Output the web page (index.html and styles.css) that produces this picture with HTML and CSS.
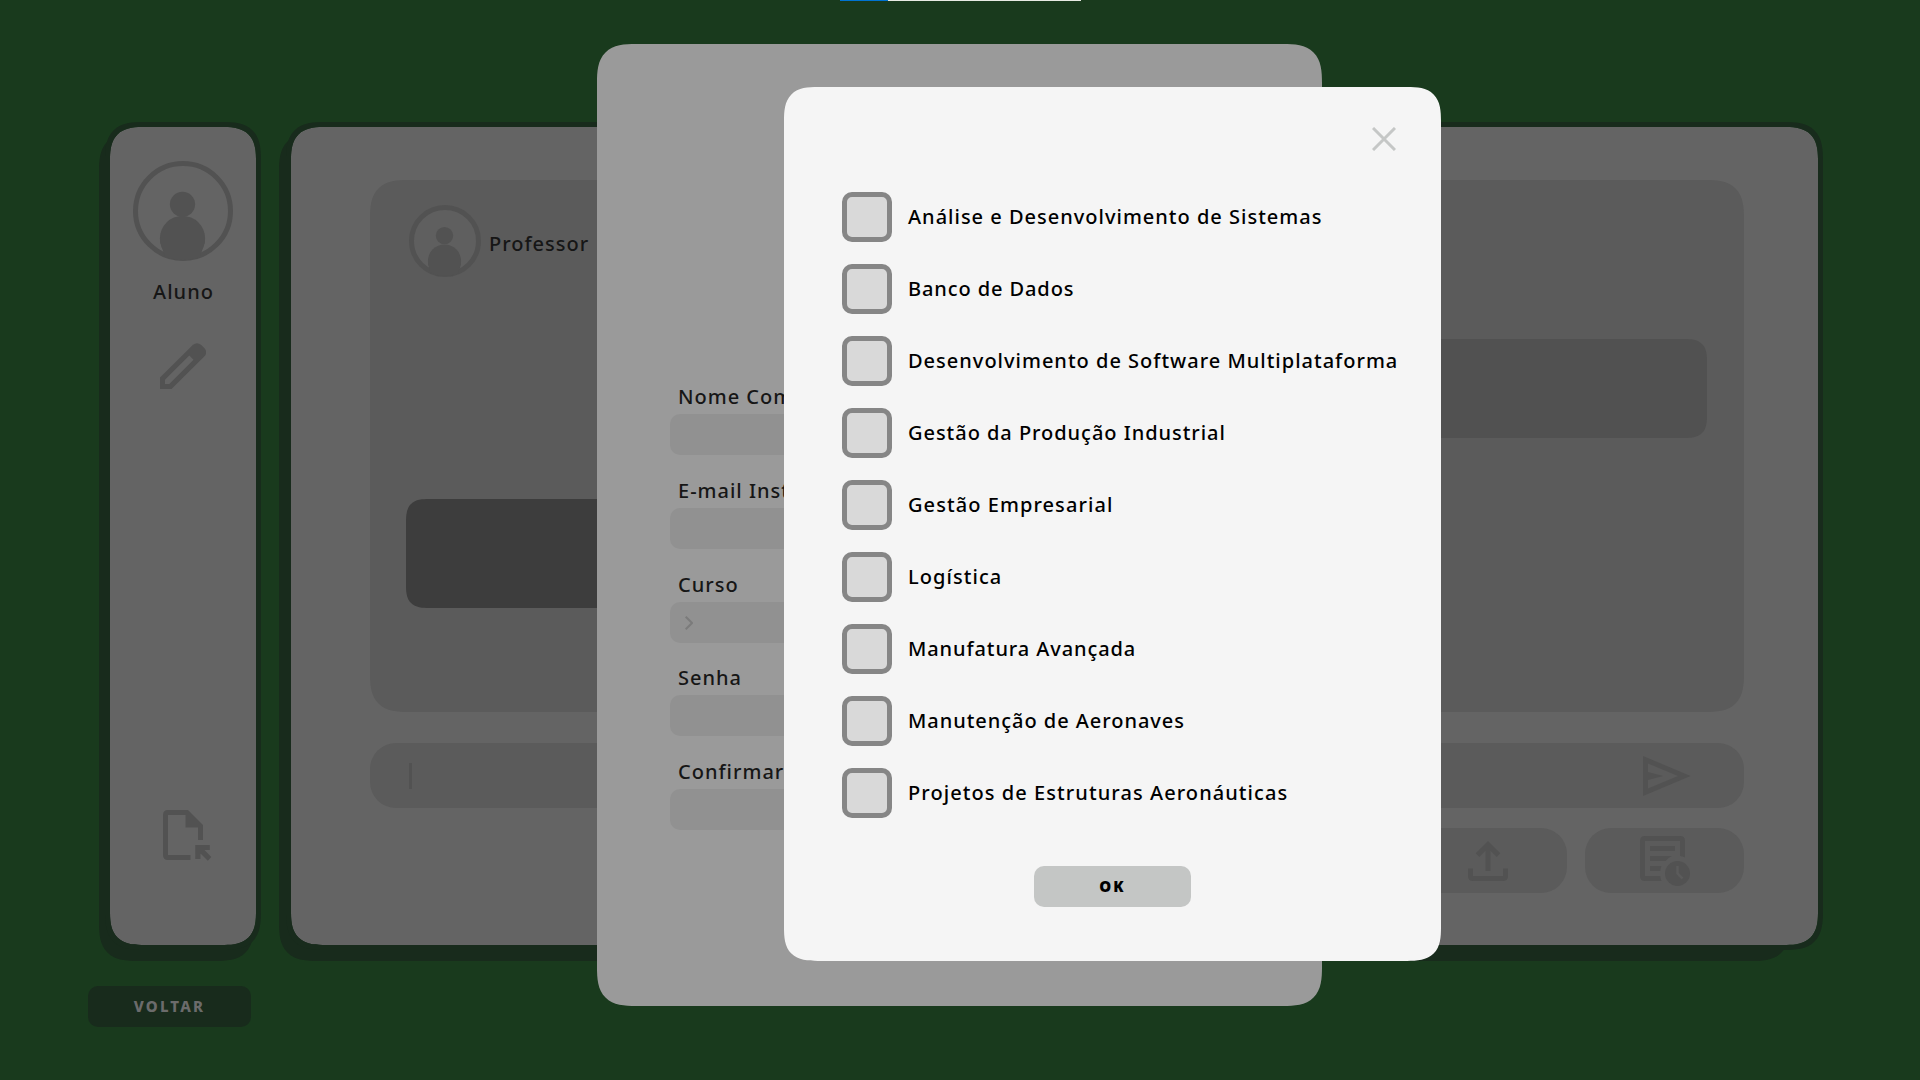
FILE: index.html
```html
<!DOCTYPE html>
<html lang="pt-BR">
<head>
<meta charset="utf-8">
<title>Cadastro de aluno</title>
<link rel="stylesheet" href="styles.css">
</head>
<body>
<div class="loader"><div class="loader-done"></div></div>
<main class="app">
  <aside class="panel sidebar">
    <svg class="avatar" width="100" height="100" viewBox="0 0 100 100">
      <clipPath id="big"><circle cx="50" cy="50" r="49"/></clipPath>
      <circle cx="50" cy="50" r="47.5" fill="none" stroke="currentColor" stroke-width="5"/>
      <g clip-path="url(#big)"><circle cx="49.5" cy="43.3" r="12.6"/><circle cx="49.5" cy="77.5" r="22.6"/><path d="M27 77.500h45v3L66 99H33L27 80.500z"/></g>
    </svg>
    <span class="name">Aluno</span>
    <svg class="pencil" width="46" height="46" viewBox="0 0 46 46">
      <path fill-rule="evenodd" d="M0 46V34.500L33 1.800Q37-1.500 41 1.800L44.500 5.300Q48 9.500 44.300 13.500L11.500 46ZM5 41H9.300L33.500 16.700L29.300 12.500L5 36.700Z"/>
    </svg>
    <svg class="file" width="50" height="52" viewBox="0 0 50 52">
      <path d="M5 0H25L40 15V30H35V17.500H22.500V5H5V45H27.500V50H5Q0 50 0 45V5Q0 0 5 0ZM32.300 35H46.800V40H41.500L48.300 47L44.800 50.700L37.500 43.500V49H32.300Z"/>
    </svg>
  </aside>
  <section class="panel content">
    <div class="chat">
      <div class="author">
        <svg width="72" height="72" viewBox="0 0 72 72">
          <clipPath id="small"><circle cx="36" cy="36" r="35"/></clipPath>
          <circle cx="36" cy="36" r="33.500" fill="#5f5f5f" stroke="currentColor" stroke-width="5"/>
          <g clip-path="url(#small)"><circle cx="35.500" cy="30.600" r="8.700"/><circle cx="35.500" cy="56" r="16.600"/><path d="M19 56h33v3l-4 13H23l-4-13z"/></g>
        </svg>
        <span class="name">Professor</span>
      </div>
      <div class="message message-sent"></div>
      <div class="message message-received"></div>
    </div>
    <div class="composer">
      <div class="caret"></div>
      <svg width="48" height="40" viewBox="0 0 48 40">
        <path fill-rule="evenodd" d="M0 0L47.500 20L0 40ZM5 7.500V16L20 20L5 24V32.500L35 20Z"/>
      </svg>
    </div>
    <div class="actions">
      <button class="action upload"><svg width="40" height="40" viewBox="0 0 40 40">
        <path d="M20 0L32.300 12.300L28.700 16L22.500 9.700V30H17.500V9.700L11.300 16L7.700 12.300ZM0 27.500H5V35H35V27.500H40V35Q40 40 35 40H5Q0 40 0 35Z"/>
      </svg></button>
      <button class="action"><svg width="50" height="50" viewBox="0 0 50 50">
        <path d="M5 0H40Q45 0 45 5V21.500Q42.500 20.300 40 20V5H5V40H20.300Q20.500 42.800 21.500 45H5Q0 45 0 40V5Q0 0 5 0ZM10 10H35V15H10ZM10 20H32Q28.500 21.500 25.500 25H10ZM10 30H21.500Q20.500 32 20.300 35H10Z"/>
        <circle cx="37.500" cy="37.500" r="12.500"/><path class="hands" d="M37.500 30V37.500L42.500 42.500"/>
      </svg></button>
    </div>
  </section>
</main>
<button class="back">VOLTAR</button>

<form class="signup">
  <label class="field"><span>Nome Completo</span><i class="input"></i></label>
  <label class="field"><span>E-mail Institucional</span><i class="input"></i></label>
  <label class="field"><span>Curso</span><i class="input"><svg width="8" height="14" viewBox="0 0 8 14"><path d="M.7.7L7 7L.7 13.300"/></svg></i></label>
  <label class="field password"><span>Senha</span><i class="input"></i></label>
  <label class="field"><span>Confirmar Senha</span><i class="input"></i></label>
</form>

<div class="courses">
  <svg class="close" width="24" height="24" viewBox="0 0 24 24"><path d="M1 1L23 23M23 1L1 23"/></svg>
  <ul class="list">
    <li><i class="box"></i><span>Análise e Desenvolvimento de Sistemas</span></li>
    <li><i class="box"></i><span class="tight">Banco de Dados</span></li>
    <li><i class="box"></i><span>Desenvolvimento de Software Multiplataforma</span></li>
    <li><i class="box"></i><span class="snug">Gestão da Produção Industrial</span></li>
    <li><i class="box"></i><span class="loose">Gestão Empresarial</span></li>
    <li><i class="box"></i><span class="loose">Logística</span></li>
    <li><i class="box"></i><span class="tight">Manufatura Avançada</span></li>
    <li><i class="box"></i><span class="snug">Manutenção de Aeronaves</span></li>
    <li><i class="box"></i><span class="loose">Projetos de Estruturas Aeronáuticas</span></li>
  </ul>
  <button class="ok">OK</button>
</div>
</body>
</html>
```
FILE: styles.css
```css
* { box-sizing: border-box; }
body {
  margin: 0;
  width: 1920px;
  height: 1080px;
  overflow: hidden;
  position: relative;
  background: #193a1d;
  font: 500 20px/28px "Noto Sans", sans-serif;
  letter-spacing: 1px;
  color: #161616;
}
svg { display: block; fill: currentColor; flex: none; }
button { border: 0; padding: 0; font: inherit; letter-spacing: inherit; color: inherit; }
.loader { width: 241px; height: 1px; margin-left: 840px; background: #e8ebe4; }
.loader-done { width: 48px; height: 1px; background: #0073d1; }

.app { display: flex; gap: 25px; padding: 121px 0 0 105px; }
.panel {
  position: relative;
  height: 828px;
  border: 5px solid #182b1c;
  border-radius: 31px;
  background: #646464;
  background-clip: padding-box;
  color: #525252;
}
.panel::before {
  content: "";
  position: absolute;
  z-index: -1;
  inset: 6px 2px -16px -11px;
  border-radius: 31px;
  background: #182b1c;
}
.sidebar {
  width: 156px;
  padding-top: 34px;
  display: flex;
  flex-direction: column;
  align-items: center;
}
.name { color: #161616; }
.sidebar .name { margin: 17px 0 0 1px; }
.pencil { margin-top: 37px; }
.file { margin: 421px 0 0 10px; }
.content { width: 1537px; padding: 53px 74px 0 79px; }
.content::before { right: 28px; left: -12px; }

.chat {
  height: 532px;
  padding: 25px 37px 0 36px;
  border-radius: 31px;
  background: #5b5b5b;
  display: flex;
  flex-direction: column;
}
.author { display: flex; align-items: center; padding-left: 3px; gap: 8px; height: 72px; }
.author .name { padding-top: 6px; }
.message { width: 600px; border-radius: 18px; }
.message-sent { align-self: flex-end; height: 99px; margin-top: 62px; background: #515151; }
.message-received { height: 109px; margin-top: 61px; background: #3d3d3d; }
.composer {
  margin-top: 31px;
  height: 65px;
  padding: 0 53px 0 39px;
  border-radius: 26px;
  background: #5b5b5b;
  display: flex;
  align-items: center;
  justify-content: space-between;
}
.caret { width: 3px; height: 26px; background: #525252; }
.actions { display: flex; justify-content: flex-end; gap: 18px; margin-top: 20px; }
.action {
  width: 159px;
  height: 65px;
  padding-top: 1px;
  border-radius: 26px;
  background: #5b5b5b;
  display: flex;
  align-items: center;
  justify-content: center;
}
.hands { fill: none; stroke: #5b5b5b; stroke-width: 2.5; }
.back {
  display: block;
  width: 163px;
  height: 41px;
  margin: 36px 0 0 88px;
  padding-bottom: 2px;
  border-radius: 10px;
  background: #182b1c;
  color: #6b6b6b;
  font-size: 15px;
  font-weight: 800;
  letter-spacing: 2.2px;
}

.signup {
  position: absolute;
  left: 597px;
  top: 44px;
  width: 725px;
  height: 962px;
  padding: 339px 73px 0;
  border-radius: 31px;
  background: #9a9a9a;
  display: flex;
  flex-direction: column;
  gap: 22px;
}
.field { display: flex; flex-direction: column; }
.field span { padding-left: 8px; height: 31px; white-space: nowrap; }
.password { margin-top: -1px; }
.input { height: 41px; padding-left: 15px; border-radius: 10px; background: #919191; display: flex; align-items: center; }
.input svg { fill: none; stroke: #7b7b7b; stroke-width: 2; }

.courses {
  position: absolute;
  left: 784px;
  top: 87px;
  width: 657px;
  height: 874px;
  padding: 40px 45px 0 58px;
  border-radius: 27px;
  background: #f5f5f5;
  color: #000;
  display: flex;
  flex-direction: column;
}
.close { align-self: flex-end; stroke: #c5c7c6; stroke-width: 3; }
.list { list-style: none; margin: 41px 0 0; padding: 0; display: flex; flex-direction: column; gap: 22px; }
.list li { display: flex; align-items: center; gap: 16px; height: 50px; white-space: nowrap; }
.box { flex: none; width: 50px; height: 50px; border: 5px solid #868686; border-radius: 10px; background: #d9d9d9; }
.tight { letter-spacing: .9px; }
.snug { letter-spacing: .96px; }
.loose { letter-spacing: 1.07px; }
.ok {
  width: 157px;
  height: 41px;
  margin: 48px 0 0 192px;
  padding-bottom: 2px;
  border-radius: 10px;
  background: #c4c6c5;
  font-size: 15px;
  font-weight: 900;
  letter-spacing: 2px;
}

@supports (corner-shape: squircle) {
  .panel, .panel::before, .signup, .courses, .chat { corner-shape: superellipse(1.5); border-radius: 39px; }
  .courses { border-radius: 34px; }
  .message { corner-shape: superellipse(1.5); border-radius: 23px; }
}
```
